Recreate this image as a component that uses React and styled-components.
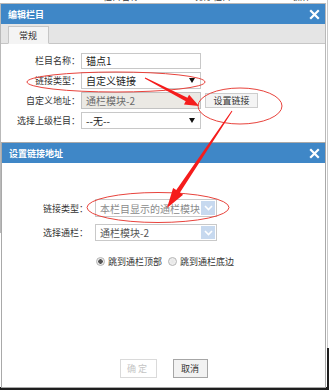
import React from "react";
import styled, { createGlobalStyle } from "styled-components";

const Global = createGlobalStyle`
  html, body { margin: 0; padding: 0; background: #fff; }
  body { font-family: "Noto Sans CJK SC", "Noto Sans", sans-serif; }
  * { box-sizing: border-box; }
`;

const Page = styled.div`
  position: relative;
  width: 329px;
  height: 390px;
  overflow: hidden;
  background:
    linear-gradient(#1e1e1e, #1e1e1e) right bottom / 2px 42px no-repeat,
    linear-gradient(#1e1e1e, #1e1e1e) left bottom / 100% 3px no-repeat,
    linear-gradient(#c9c9c9, #c9c9c9) 327px 0 / 1px 100% no-repeat,
    #fff;
  font-family: "Noto Sans CJK SC", "Noto Sans", sans-serif;
`;

const BgHeader = styled.div`
  height: 3px;
  overflow: hidden;
`;

const BgHeaderRow = styled.div`
  display: flex;
  margin-top: -9px;
  height: 12px;
  line-height: 12px;
  font-size: 9px;
  color: #333;
`;

const BgCell = styled.span`
  margin-left: ${(p) => p.$ml}px;
`;

const Dialog = styled.div`
  position: absolute;
  left: ${(p) => p.$left}px;
  top: ${(p) => p.$top}px;
  width: ${(p) => p.$width}px;
  height: ${(p) => p.$height}px;
  background: #fff;
  border: 1px solid ${(p) => p.$border};
  display: flex;
  flex-direction: column;
`;

const TitleBar = styled.div`
  height: 20px;
  flex: none;
  background: #3f87c7;
  display: flex;
  align-items: center;
  justify-content: space-between;
  padding: 0 5px 0 7px;
  color: #fff;
  font-size: 9px;
  font-weight: bold;
`;

const CloseIcon = () => (
  <svg width="11" height="11" viewBox="0 0 11 11">
    <path d="M2 2 L9 9 M9 2 L2 9" stroke="#fff" strokeWidth="2.2" strokeLinecap="square" />
  </svg>
);

const TabBar = styled.div`
  height: 20px;
  flex: none;
  background: #e5e5e5;
  border-bottom: 1px solid #c6c6c6;
  display: flex;
  align-items: flex-end;
  padding-left: 7px;
`;

const Tab = styled.div`
  width: 41px;
  height: 18px;
  margin-bottom: -1px;
  background: #f4f4f4;
  border: 1px solid #c6c6c6;
  border-bottom-color: #f4f4f4;
  font-size: 9px;
  color: #333;
  display: flex;
  align-items: center;
  padding-left: 10px;
`;

const Form1 = styled.div`
  display: grid;
  grid-template-columns: 79px 120px auto;
  grid-auto-rows: 17px;
  column-gap: 1px;
  row-gap: 3px;
  padding-top: 8px;
  align-items: center;
`;

const Label = styled.div`
  text-align: right;
  font-size: 9px;
  color: #333;
  white-space: nowrap;
`;

const TextBox = styled.div`
  height: ${(p) => p.$h || 17}px;
  width: ${(p) => p.$w || 120}px;
  border: 1px solid ${(p) => (p.$disabled ? "#c2c2c2" : "#c8c8c8")};
  background: ${(p) => (p.$disabled ? "#ebe9e4" : "#fff")};
  color: ${(p) => (p.$disabled ? "#6a6a6a" : "#222")};
  font-size: 10px;
  display: flex;
  align-items: center;
  justify-content: space-between;
  padding: 0 4px 0 4px;
  white-space: nowrap;
`;

const Tri = styled.span`
  width: 0;
  height: 0;
  border-left: 3px solid transparent;
  border-right: 3px solid transparent;
  border-top: 5px solid #111;
  margin-right: 1px;
`;

const PlainButton = styled.div`
  margin-left: 3px;
  width: 53px;
  height: 15px;
  border: 1px solid #cdcdcd;
  background: #f4f4f4;
  font-size: 9px;
  color: #333;
  display: flex;
  align-items: center;
  justify-content: center;
`;

const Body2 = styled.div`
  flex: 1;
  display: flex;
  flex-direction: column;
  padding-top: 36px;
`;

const Form2 = styled.div`
  display: grid;
  grid-template-columns: 86px 122px;
  column-gap: 7px;
  row-gap: 7px;
  align-items: center;
`;

const Select2 = styled.div`
  height: ${(p) => p.$h}px;
  border: 1px solid #c9c9c9;
  background: #fff;
  display: flex;
  align-items: center;
  justify-content: space-between;
  padding: 0 1px 0 4px;
  font-size: 10px;
  color: ${(p) => (p.$muted ? "#8a8a8a" : "#555")};
  white-space: nowrap;
  overflow: hidden;
`;

const DropBtn = styled.span`
  flex: none;
  width: 14px;
  height: ${(p) => p.$h}px;
  background: #c7d9ef;
  display: flex;
  align-items: center;
  justify-content: center;
`;

const Chevron = () => (
  <svg width="9" height="6" viewBox="0 0 9 6">
    <path d="M1 1 L4.5 4.5 L8 1" fill="none" stroke="#fff" strokeWidth="1.6" />
  </svg>
);

const RadioRow = styled.div`
  display: flex;
  align-items: center;
  margin-top: 15px;
  padding-left: 94px;
  height: 11px;
  font-size: 9px;
  color: #333;
`;

const RadioItem = styled.label`
  display: flex;
  align-items: center;
  gap: 3px;
  margin-right: 6px;
`;

const RadioDot = styled.span`
  width: 9px;
  height: 9px;
  border-radius: 50%;
  border: 1px solid #b4b4b4;
  background: radial-gradient(circle, ${(p) => (p.$on ? "#555 0 2px, #ececec 2.5px" : "#e6e6e6 0, #f4f4f4 100%")});
`;

const Footer = styled.div`
  margin-top: auto;
  display: flex;
  justify-content: center;
  gap: 16px;
  padding-bottom: 9px;
`;

const FootBtn = styled.div`
  width: ${(p) => p.$w}px;
  height: 19px;
  border: 1px solid ${(p) => (p.$disabled ? "#dadada" : "#a6a6a6")};
  background: ${(p) => (p.$disabled ? "#fff" : "#f2f2f2")};
  color: ${(p) => (p.$disabled ? "#c4c4c4" : "#333")};
  font-size: 9px;
  display: flex;
  align-items: center;
  justify-content: center;
  letter-spacing: ${(p) => (p.$spaced ? "2px" : "0")};
`;

const Overlay = styled.svg`
  position: absolute;
  left: 0;
  top: 0;
  pointer-events: none;
`;

function arrowPoints(x1, y1, x2, y2, headLen, headW, neckW, tailW) {
  const dx = x2 - x1;
  const dy = y2 - y1;
  const len = Math.hypot(dx, dy);
  const ux = dx / len;
  const uy = dy / len;
  const nx = -uy;
  const ny = ux;
  const bx = x2 - ux * headLen;
  const by = y2 - uy * headLen;
  const pts = [
    [x1 + (nx * tailW) / 2, y1 + (ny * tailW) / 2],
    [bx + (nx * neckW) / 2, by + (ny * neckW) / 2],
    [bx + (nx * headW) / 2, by + (ny * headW) / 2],
    [x2, y2],
    [bx - (nx * headW) / 2, by - (ny * headW) / 2],
    [bx - (nx * neckW) / 2, by - (ny * neckW) / 2],
    [x1 - (nx * tailW) / 2, y1 - (ny * tailW) / 2],
  ];
  return pts.map((p) => p.map((v) => v.toFixed(1)).join(",")).join(" ");
}

export default function App() {
  return (
    <>
      <Global />
      <Page>
        <BgHeader>
          <BgHeaderRow>
            <BgCell $ml={103}>栏目名称</BgCell>
            <BgCell $ml={56}>排序栏目</BgCell>
            <BgCell $ml={62}>操作</BgCell>
          </BgHeaderRow>
        </BgHeader>

        <Dialog $left={0} $top={3} $width={326} $height={230} $border="#b9b9b9">
          <TitleBar>
            <span>编辑栏目</span>
            <CloseIcon />
          </TitleBar>
          <TabBar>
            <Tab>常规</Tab>
          </TabBar>
          <Form1>
            <Label>栏目名称：</Label>
            <TextBox $h={16}>锚点1</TextBox>
            <span />
            <Label>链接类型：</Label>
            <TextBox>
              自定义链接
              <Tri />
            </TextBox>
            <span />
            <Label>自定义地址：</Label>
            <TextBox $disabled>通栏模块-2</TextBox>
            <PlainButton>设置链接</PlainButton>
            <Label>选择上级栏目：</Label>
            <TextBox>
              --无--
              <Tri />
            </TextBox>
            <span />
          </Form1>
        </Dialog>

        <Dialog $left={1} $top={142} $width={325} $height={246} $border="#a9a9a9">
          <TitleBar>
            <span>设置链接地址</span>
            <CloseIcon />
          </TitleBar>
          <Body2>
            <Form2>
              <Label>链接类型：</Label>
              <Select2 $h={18} $muted>
                本栏目显示的通栏模块
                <DropBtn $h={14}>
                  <Chevron />
                </DropBtn>
              </Select2>
              <Label>选择通栏：</Label>
              <Select2 $h={17}>
                通栏模块-2
                <DropBtn $h={13}>
                  <Chevron />
                </DropBtn>
              </Select2>
            </Form2>
            <RadioRow>
              <RadioItem>
                <RadioDot $on />
                跳到通栏顶部
              </RadioItem>
              <RadioItem>
                <RadioDot />
                跳到通栏底边
              </RadioItem>
            </RadioRow>
            <Footer>
              <FootBtn $w={37} $disabled $spaced>
                确定
              </FootBtn>
              <FootBtn $w={35}>取消</FootBtn>
            </Footer>
          </Body2>
        </Dialog>

        <Overlay width="329" height="390" viewBox="0 0 329 390">
          <ellipse cx="116" cy="82" rx="89" ry="10" fill="none" stroke="#e8433c" strokeWidth="1" />
          <ellipse cx="240" cy="106" rx="42" ry="18" fill="none" stroke="#e8433c" strokeWidth="1" />
          <ellipse cx="158" cy="207.5" rx="71" ry="15" fill="none" stroke="#e8433c" strokeWidth="1" />
          <polygon points={arrowPoints(145, 78, 199, 106, 14, 11, 4, 1)} fill="#f51c1c" />
          <polygon points={arrowPoints(232, 111, 167, 208, 20, 12, 4.5, 1)} fill="#f51c1c" />
        </Overlay>
      </Page>
    </>
  );
}
